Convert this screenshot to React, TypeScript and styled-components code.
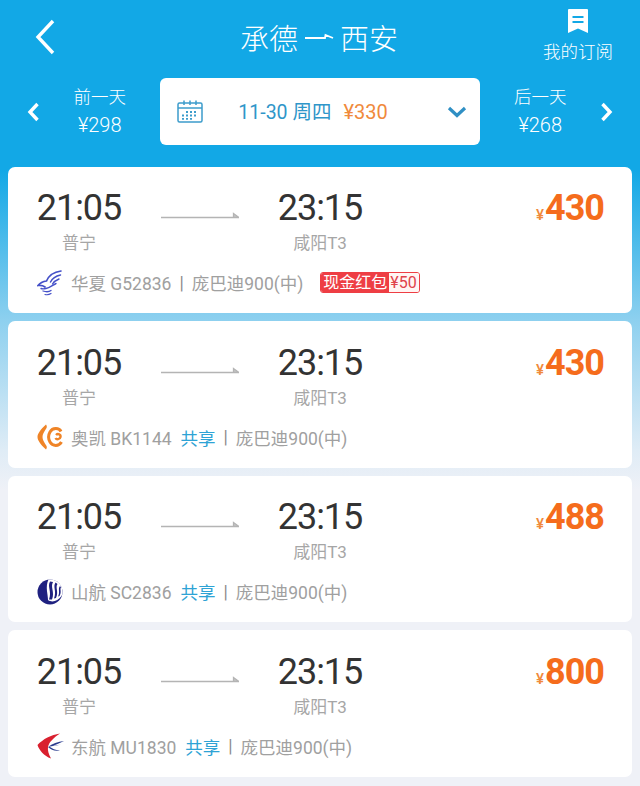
import React from 'react'
import styled, { createGlobalStyle } from 'styled-components'

const GlobalStyle = createGlobalStyle`
  html, body { margin: 0; padding: 0; }
  body {
    width: 640px;
    height: 786px;
    overflow: hidden;
    font-family: Roboto, "Noto Sans CJK SC", sans-serif;
  }
`

const Page = styled.div`
  width: 640px;
  height: 786px;
  overflow: hidden;
  background: linear-gradient(180deg, #12a8e6 0, #12a8e6 170px, #8dd0ef 320px, #dfecf6 450px, #eff1f7 490px, #eff1f7 100%);
`

const TitleBar = styled.div`
  height: 78px;
  display: grid;
  grid-template-columns: 120px 1fr 120px;
  align-items: center;
  color: #fff;
`

const BackButton = styled.div`
  padding: 0 0 4px 35px;
  display: flex;
`

const Title = styled.div`
  font-size: 29px;
  font-weight: 300;
  text-align: center;
  padding: 0 2px 4px 0;
  display: flex;
  justify-content: center;
  align-items: center;
  gap: 6px;
`

const Subscribe = styled.div`
  font-size: 17.5px;
  font-weight: 300;
  display: flex;
  flex-direction: column;
  align-items: center;
  padding-right: 4px;
  white-space: nowrap;
  gap: 5px;
  padding-bottom: 6px;
`

const DateBar = styled.div`
  height: 67px;
  display: grid;
  grid-template-columns: 160px 320px 160px;
  color: #fff;
`

const DayNav = styled.div<{ $next?: boolean }>`
  display: flex;
  flex-direction: ${p => (p.$next ? 'row-reverse' : 'row')};
  align-items: center;
  justify-content: space-between;
  padding: ${p => (p.$next ? '0 27px 0 34px' : '0 34px 0 27px')};
`

const DayText = styled.div`
  display: flex;
  flex-direction: column;
  align-items: center;
  gap: 4px;
`

const DayLabel = styled.div`
  font-size: 17.5px;
  font-weight: 300;
  line-height: 22px;
`

const DayPrice = styled.div`
  font-size: 20px;
  font-weight: 300;
  line-height: 26px;
`

const DateBox = styled.div`
  background: #fff;
  border-radius: 6px;
  display: flex;
  align-items: center;
  padding: 0 13px 0 17px;
`

const DateText = styled.div`
  flex: 1;
  display: flex;
  justify-content: center;
  align-items: baseline;
  gap: 12px;
  padding: 0 24px 2px 0;
  font-size: 19.5px;
  color: #2f96c9;
`

const DatePrice = styled.span`
  font-size: 20px;
  color: #f08a3c;
`

const List = styled.div`
  padding: 21.7px 8px 0;
  display: flex;
  flex-direction: column;
  gap: 8px;
`

const Card = styled.div`
  height: 146.6px;
  box-sizing: border-box;
  background: #fff;
  border-radius: 7px;
  padding: 21.6px 28px 0 28px;
`

const Top = styled.div`
  display: flex;
  align-items: flex-start;
`

const Stop = styled.div`
  width: 86px;
  display: flex;
  flex-direction: column;
  align-items: center;
`

const Time = styled.div`
  font-size: 36px;
  letter-spacing: -1px;
  line-height: 40px;
  color: #333;
`

const Place = styled.div`
  font-size: 17px;
  line-height: 24px;
  margin-top: 3px;
  color: #a6a6a6;
  white-space: nowrap;
`

const ArrowWrap = styled.div`
  width: 78px;
  margin: 24px 38px 0 39px;
  display: flex;
`

const Price = styled.div`
  margin-left: auto;
  color: #f56c1c;
  font-size: 36px;
  letter-spacing: -1px;
  font-weight: 700;
  line-height: 40px;
`

const Yen = styled.span`
  font-size: 15px;
  font-weight: 500;
  letter-spacing: 0;
  color: #f08a3c;
  margin-right: 1px;
`

const Info = styled.div`
  margin-top: 13.4px;
  height: 28px;
  padding-left: 1px;
  display: flex;
  align-items: center;
  font-size: 17.5px;
  color: #a0a0a0;
  white-space: nowrap;
`

const LogoSlot = styled.div`
  width: 34px;
  display: flex;
  flex-shrink: 0;
`

const Share = styled.span`
  color: #2ea3d5;
  margin-left: 9px;
`

const Sep = styled.span`
  margin: 0 8px;
  color: #8c8c8c;
`

const Badge = styled.div`
  margin-left: 17px;
  display: flex;
  height: 21px;
  box-sizing: border-box;
  border: 1px solid #ee3e44;
  border-radius: 3px;
  overflow: hidden;
  font-size: 16px;
  line-height: 19px;
`

const BadgeLabel = styled.span`
  background: #ee3e44;
  color: #fff;
  padding: 0 2px 0 2px;
`

const BadgeValue = styled.span`
  background: #fff5f3;
  color: #e0424a;
  padding: 0 2px 0 1px;
`

const BackIcon = () => (
  <svg width="20" height="36" viewBox="0 0 20 36" fill="none">
    <path d="M18 2 L3 18 L18 34" stroke="#fff" strokeWidth="3.4" />
  </svg>
)

const RouteDash = () => (
  <svg width="30" height="14" viewBox="0 0 30 14">
    <path d="M1 8 H21 L21.500 5 L29 8" stroke="#fff" strokeWidth="1.8" fill="none" />
  </svg>
)

const BookmarkIcon = () => (
  <svg width="20" height="24" viewBox="0 0 20 24">
    <path fill="#fff" fillRule="evenodd" d="M1 0 H19 a1 1 0 0 1 1 1 V24 L10 19.5 L0 24 V1 a1 1 0 0 1 1-1 Z M4.5 7 V9 H15.5 V7 Z M4.5 12 V14 H15.5 V12 Z" />
  </svg>
)

const Chevron = ({ dir }: { dir: 'left' | 'right' }) => (
  <svg width="13" height="20" viewBox="0 0 13 20" fill="none">
    <path d={dir === 'left' ? 'M10.5 2 L3 10 L10.5 18' : 'M2.5 2 L10 10 L2.5 18'} stroke="#fff" strokeWidth="3.4" />
  </svg>
)

const CalendarIcon = () => (
  <svg width="26" height="23" viewBox="0 0 26 23" fill="none">
    <rect x="1" y="3" width="24" height="19" rx="1.5" stroke="#3c9ccb" strokeWidth="1.5" />
    <path d="M1 8 H25" stroke="#3c9ccb" strokeWidth="1.5" />
    <path d="M7 0.5 V5 M13 0.5 V5 M19 0.5 V5" stroke="#3c9ccb" strokeWidth="1.5" />
    <path d="M9 12 h2 M13 12 h2 M17 12 h2 M9 15.5 h2 M13 15.5 h2 M17 15.5 h2 M5 15.5 h2 M5 18.8 h2 M9 18.8 h2 M13 18.8 h2" stroke="#3c9ccb" strokeWidth="1.8" />
  </svg>
)

const ChevronDown = () => (
  <svg width="20" height="14" viewBox="0 0 20 14" fill="none">
    <path d="M2 3 L10 10.5 L18 3" stroke="#2f8fc4" strokeWidth="3.2" />
  </svg>
)

const FlightArrow = () => (
  <svg width="78" height="8" viewBox="0 0 78 8">
    <path d="M0 5.5 H78 L72.5 1.5 V5" stroke="#b4b4b4" strokeWidth="1.3" fill="#c4c4c4" />
  </svg>
)

const HuaxiaLogo = () => (
  <svg width="26" height="26" viewBox="0 0 26 26" fill="none" stroke="#4450c8" strokeLinecap="round">
    <path d="M24 1 C17 2 12 5 9.500 11 C6 11.500 3 13 1 15.500 C4 15 6 15.500 8 17" strokeWidth="1.7" />
    <path d="M23.500 5 C19 6 15.500 8 13.500 12" strokeWidth="1.5" />
    <path d="M22 9 C19.500 10 17 11.500 15.500 14" strokeWidth="1.4" />
    <path d="M19 13.500 C16 15 13.500 17.500 9 18.500 C7 19 5 19 4 18.500" strokeWidth="1.4" />
    <path d="M6 21 C9 22 12 22 14 20.500" strokeWidth="1.3" />
    <path d="M8 24.500 C10 25 12.500 24.500 14 23.500" strokeWidth="1.2" />
  </svg>
)

const OkayLogo = () => (
  <svg width="26" height="26" viewBox="0 0 26 26" fill="none" stroke="#ef8427">
    <path d="M9 0.500 C3 6 0.500 10 0.500 13 C0.500 16 3 20 9 25.500 C10 24 10 23 9.500 22 C7 18 5.500 15.500 5.500 13 C5.500 10.500 7 8 9.500 4 C10 3 10 2 9 0.500 Z" fill="#ef8427" stroke="none" />
    <path d="M24 7.500 C22 3.500 15.500 3.500 13 8 C11 11.500 11 14.500 13 18 C15.500 22.500 22 22.500 24.500 18" strokeWidth="3" />
    <path d="M19 11 C21 9 24 10.500 23.500 13 C23 15.500 19.500 16 18.500 14" strokeWidth="2.4" />
  </svg>
)

const ShandongLogo = () => (
  <svg width="26" height="26" viewBox="0 0 26 26">
    <circle cx="13" cy="13" r="12.500" fill="#1f2180" />
    <path d="M11.500 0.500 C8 8 11 15 11 21 C15 24 21 22 24.500 17 C25.500 15 25.500 13 25.500 13 C25.500 5 19 0 13 0.500 Z" fill="#fff" />
    <path d="M13 2.500 C10 8 15 12 12 20.500 L15 20.500 C18 13 13 8 16 3 Z" fill="#1f2180" />
    <path d="M18.500 3.500 C15.500 8 20 12 17 19.500 L19 19 C22 13 18 8.500 20.500 5 Z" fill="#1f2180" />
    <path d="M23 7 C20.500 10 23.500 13 21 17.500 L22.500 17 C25 13 22.500 10 24 8.500 Z" fill="#1f2180" />
  </svg>
)

const EasternLogo = () => (
  <svg width="28" height="26" viewBox="0 0 28 26">
    <path d="M23 0.500 C14 2 6 6 0.500 12 C2 17 7 23 14 25.500 C11.500 21 10.500 17 11 14 C12 9 17 4.500 23 0.500 Z" fill="#d9202f" />
    <path d="M27 8 C21 8.500 15 10.500 11 14 C15 13 20 12.500 24 11.500 C20 12 17 12.500 14.500 13.500 C18 12 23 10 27 8 Z" fill="#2a3c8f" />
    <path d="M11 14 C14 17 18 18.500 23 17.500 C18 17 15 15.500 13 14 Z" fill="#2a3c8f" />
  </svg>
)

const flights = [
  { logo: <HuaxiaLogo />, airline: '华夏 G52836', shared: false, price: 430, bonus: true },
  { logo: <OkayLogo />, airline: '奥凯 BK1144', shared: true, price: 430, bonus: false },
  { logo: <ShandongLogo />, airline: '山航 SC2836', shared: true, price: 488, bonus: false },
  { logo: <EasternLogo />, airline: '东航 MU1830', shared: true, price: 800, bonus: false },
]

export default function App() {
  return (
    <Page>
      <GlobalStyle />
      <TitleBar>
        <BackButton><BackIcon /></BackButton>
        <Title>承德<RouteDash />西安</Title>
        <Subscribe>
          <BookmarkIcon />
          我的订阅
        </Subscribe>
      </TitleBar>
      <DateBar>
        <DayNav>
          <Chevron dir="left" />
          <DayText>
            <DayLabel>前一天</DayLabel>
            <DayPrice>¥298</DayPrice>
          </DayText>
        </DayNav>
        <DateBox>
          <CalendarIcon />
          <DateText>
            11-30 周四
            <DatePrice>¥330</DatePrice>
          </DateText>
          <ChevronDown />
        </DateBox>
        <DayNav $next>
          <Chevron dir="right" />
          <DayText>
            <DayLabel>后一天</DayLabel>
            <DayPrice>¥268</DayPrice>
          </DayText>
        </DayNav>
      </DateBar>
      <List>
        {flights.map(f => (
          <Card key={f.airline}>
            <Top>
              <Stop>
                <Time>21:05</Time>
                <Place>普宁</Place>
              </Stop>
              <ArrowWrap><FlightArrow /></ArrowWrap>
              <Stop>
                <Time>23:15</Time>
                <Place>咸阳T3</Place>
              </Stop>
              <Price><Yen>¥</Yen>{f.price}</Price>
            </Top>
            <Info>
              <LogoSlot>{f.logo}</LogoSlot>
              {f.airline}
              {f.shared && <Share>共享</Share>}
              <Sep>|</Sep>
              庞巴迪900(中)
              {f.bonus && (
                <Badge>
                  <BadgeLabel>现金红包</BadgeLabel>
                  <BadgeValue>¥50</BadgeValue>
                </Badge>
              )}
            </Info>
          </Card>
        ))}
      </List>
    </Page>
  )
}
